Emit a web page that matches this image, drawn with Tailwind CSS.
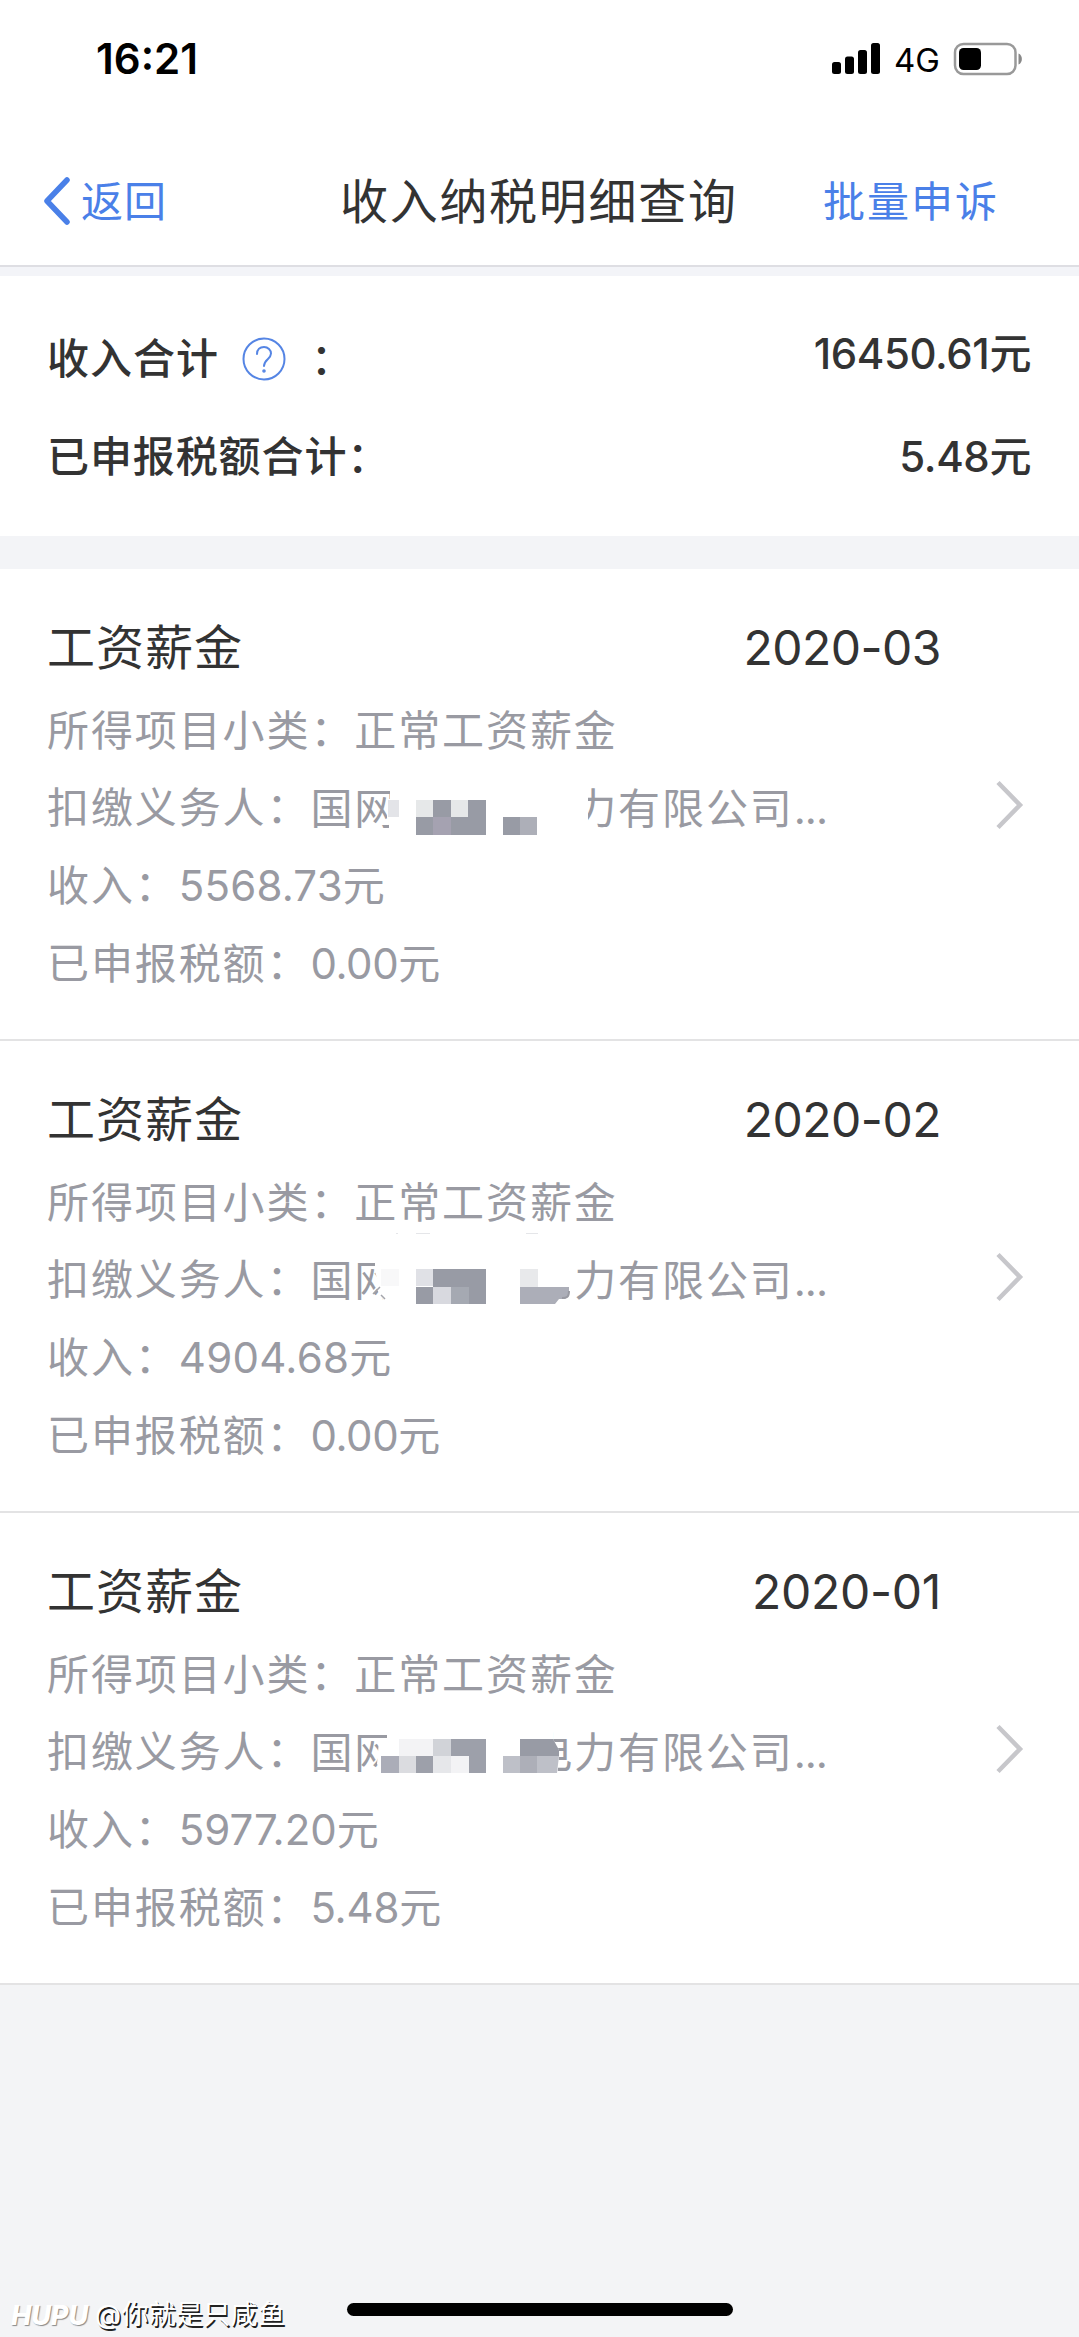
<!DOCTYPE html>
<html lang="zh-CN">
<head>
<meta charset="utf-8">
<title>收入纳税明细查询</title>
<script src="https://cdn.jsdelivr.net/npm/@tailwindcss/browser@4"></script>
</head>
<body class="w-[1079px] h-[2337px] overflow-hidden bg-[#f3f4f6] text-[#333333] font-['Inter','Noto_Sans_CJK_SC',sans-serif] flex flex-col">
  <!-- status bar -->
  <header class="h-[118px] bg-white flex items-center justify-between pl-[96px] pr-[54px] shrink-0">
    <span class="text-[42px] leading-none font-semibold text-black">16:21</span>
    <div class="flex items-center text-black">
      <svg class="w-[50px] h-[34px]" viewBox="0 0 50 34"><rect x="0" y="20" width="9" height="12" rx="2.5"/><rect x="13" y="14.500" width="9" height="17.500" rx="2.500"/><rect x="26" y="8" width="9" height="24" rx="2.500"/><rect x="39" y="1" width="9" height="31" rx="2.500"/></svg>
      <span class="text-[33px] leading-none ml-[12px] w-[48px] pt-[2px]">4G</span>
      <svg class="w-[72px] h-[34px] ml-[11px]" viewBox="0 0 72 34"><rect x="2" y="2" width="60.500" height="30" rx="8.500" fill="none" stroke="#999" stroke-width="2.500"/><rect x="6" y="6" width="22" height="22" rx="4.500"/><path d="M65.500 11.500c4.500 1.500 4.500 9.500 0 11z" fill="#888"/></svg>
    </div>
  </header>
  <!-- navigation -->
  <nav class="h-[149px] bg-white border-b-2 border-[#dedee3] grid grid-cols-[340px_1fr_340px] shrink-0">
    <div class="flex items-center pl-[44px] h-[166px] text-[#4a80e8]">
      <svg class="w-[26px] h-[48px]" viewBox="0 0 26 48" fill="none" stroke="currentColor" stroke-width="5.500" stroke-linecap="round" stroke-linejoin="round"><path d="M23 3 3 24l20 21"/></svg>
      <span class="text-[42px] leading-none ml-[11px] tracking-[1px] pt-[1px]">返回</span>
    </div>
    <h1 class="flex items-center h-[168px] text-[48px] leading-none tracking-[1.700px] whitespace-nowrap">收入纳税明细查询</h1>
    <div class="flex items-center justify-end h-[167px] pr-[80px] text-[42px] leading-none tracking-[2px] text-[#4a80e8]">批量申诉</div>
  </nav>
  <div class="h-[9px] bg-[#f3f4f8] shrink-0"></div>
  <!-- totals -->
  <section class="h-[260px] bg-white pl-[47px] pr-[48px] pt-[34px] font-medium text-[42px] leading-none shrink-0">
    <div class="h-[98px] flex items-center justify-between">
      <div class="flex items-center tracking-[1px]">收入合计
        <svg class="w-[44px] h-[44px] ml-[23px] mr-[25px]" viewBox="0 0 44 44" fill="none" stroke="#5585e4" stroke-width="2" stroke-linecap="round"><circle cx="22" cy="22" r="20.500"/><path d="M15 17c0-4.500 3-7 7-7s7 3 7 6.500c0 5.500-7 6-7 12.500"/><circle cx="22" cy="34" r=".8"/></svg>：</div>
      <span class="pb-[10px] tracking-[-0.4px]">16450.61元</span>
    </div>
    <div class="h-[98px] flex items-center justify-between"><span class="tracking-[.9px]">已申报税额合计：</span><span class="tracking-[-0.4px]">5.48元</span></div>
  </section>
  <div class="h-[33px] bg-[#f3f4f7] shrink-0"></div>
  <!-- income records -->
  <main class="shrink-0 text-[42px] leading-none text-[#999aa2]">
    <article class="h-[472px] bg-white border-b-2 border-[#e3e3e4] pl-[47px] relative">
      <div class="h-[122px] pt-[36px] pr-[138px] flex justify-between items-center text-[48px] text-[#333333]"><h2 class="tracking-[1px]">工资薪金</h2><time class="tracking-[-0.5px]">2020-03</time></div>
      <p class="h-[78px] pt-[2px] flex items-center tracking-[1.900px]">所得项目小类：正常工资薪金</p>
      <p class="h-[78px] flex items-center tracking-[1.900px]">扣缴义务人：<span class="relative flex items-center h-[78px] pt-[1px]">国网<span class="w-[176px]"></span>力有限公司<span class="tracking-[-1px]">...</span>
        <svg class="absolute left-0 top-0 w-[320px] h-[78px]" viewBox="311 769 320 78" shape-rendering="crispEdges"><path fill="#fff" d="M393 780H589V840H384V832H390V818H388Z"/><path fill="#e3e4e8" d="M389 800h11v17h-11z"/><path fill="#e6e8e9" d="M417 800h17v17h-17zM452 800h17v17h-17z"/><path fill="#989ba5" d="M434 800h18v17h-18zM469 800h18v35h-35v-18h17zM417 817h17v18h-17zM504 817h17v18h-17z"/><path fill="#a5a2b1" d="M434 817h18v18h-18z"/><path fill="#adafb8" d="M521 817h17v18h-17z"/></svg></span></p>
      <p class="h-[78px] flex items-center tracking-[1.900px]">收入：<span class="tracking-[.2px]">5568.73元</span></p>
      <p class="h-[78px] flex items-center tracking-[1.900px]">已申报税额：<span class="tracking-[-0.4px]">0.00元</span></p>
      <svg class="absolute right-[55px] top-[211px] w-[28px] h-[50px]" viewBox="0 0 28 50" fill="none" stroke="#c7c7cb" stroke-width="4.500"><path d="M2 2.500 24 25 2 47.500"/></svg>
    </article>
    <article class="h-[472px] bg-white border-b-2 border-[#e3e3e4] pl-[47px] relative">
      <div class="h-[122px] pt-[36px] pr-[138px] flex justify-between items-center text-[48px] text-[#333333]"><h2 class="tracking-[1px]">工资薪金</h2><time class="tracking-[-0.5px]">2020-02</time></div>
      <p class="h-[78px] pt-[2px] flex items-center tracking-[1.900px]">所得项目小类：正常工资薪金</p>
      <p class="h-[78px] flex items-center tracking-[1.900px]">扣缴义务人：<span class="relative flex items-center h-[78px] pt-[1px]">国网<span class="w-[176px]"></span>力有限公司<span class="tracking-[-1px]">...</span>
        <svg class="absolute left-0 -top-[10px] w-[320px] h-[88px]" viewBox="311 1231 320 88"><path fill="#fff" d="M376 1255H420V1306H388L377 1288 379 1281 376 1272Z"/><path fill="none" stroke="#a3a4ab" stroke-width="1.500" d="m374 1294 7-7m1 8 4 4"/><path fill="#f8f8f9" d="M382 1269h18v17h-18z"/><path fill="#e0e1e6" d="M417 1269h17v17h-17z"/><path fill="#989ba5" d="M434 1269h53v35h-17v-17h-36zM417 1287h17v17h-17z"/><path fill="#d8d9df" d="M434 1287h18v17h-18z"/><path fill="#a5a9b2" d="M452 1287h18v17h-18z"/><path fill="#e8e9eb" d="M521 1269h18v18h-18z"/><path fill="#acaeb8" d="M521 1287h49v7l-4 5h-6l-4 5h-35z"/><path fill="none" stroke="#999aa2" stroke-width="2" d="M570 1291c0 6-2 7-7 7"/><path fill="#e5e6e9" d="M397 1233h2v1h-2zM417 1233h14v1h-14zM527 1233h12v1h-12z"/></svg></span></p>
      <p class="h-[78px] flex items-center tracking-[1.900px]">收入：<span class="tracking-[.3px]">4904.68元</span></p>
      <p class="h-[78px] flex items-center tracking-[1.900px]">已申报税额：<span class="tracking-[-0.4px]">0.00元</span></p>
      <svg class="absolute right-[55px] top-[211px] w-[28px] h-[50px]" viewBox="0 0 28 50" fill="none" stroke="#c7c7cb" stroke-width="4.500"><path d="M2 2.500 24 25 2 47.500"/></svg>
    </article>
    <article class="h-[472px] bg-white border-b-2 border-[#e3e3e4] pl-[47px] relative">
      <div class="h-[122px] pt-[36px] pr-[138px] flex justify-between items-center text-[48px] text-[#333333]"><h2 class="tracking-[1px]">工资薪金</h2><time class="tracking-[-0.3px]">2020-01</time></div>
      <p class="h-[78px] pt-[2px] flex items-center tracking-[1.900px]">所得项目小类：正常工资薪金</p>
      <p class="h-[78px] flex items-center tracking-[1.900px]">扣缴义务人：<span class="relative flex items-center h-[78px] pt-[1px]">国网<span class="w-[132px]"></span>电力有限公司<span class="tracking-[-1px]">...</span>
        <svg class="absolute left-0 top-0 w-[320px] h-[78px]" viewBox="311 1713 320 78"><path fill="#fff" d="M388 1725H554V1739L560 1750V1756L558 1780H382V1770L378 1764 380 1740H388Z"/><path fill="#f3f3f5" d="M400 1739h34v17h-34zM452 1756h18v17h-18z"/><path fill="#d1d3d8" d="M434 1739h18v17h-18z"/><path fill="#9da0aa" d="M452 1739h35v34h-17v-17h-18zM417 1756h17v17h-17z"/><path fill="#abadb8" d="M382 1756h18v17h-18z"/><path fill="#dbdce0" d="M400 1756h17v17h-17z"/><path fill="#e6e7ea" d="M434 1756h18v17h-18z"/><path fill="#989ba5" d="M521 1739h33l6 11v6h-39z"/><path fill="#bec0c8" d="M504 1756h56l-2 17h-54z"/><path fill="#adafb8" d="M521 1756h17v17h-17z"/></svg></span></p>
      <p class="h-[78px] flex items-center tracking-[1.900px]">收入：<span class="tracking-normal">5977.20元</span></p>
      <p class="h-[78px] flex items-center tracking-[1.900px]">已申报税额：<span class="tracking-[-0.2px]">5.48元</span></p>
      <svg class="absolute right-[55px] top-[211px] w-[28px] h-[50px]" viewBox="0 0 28 50" fill="none" stroke="#c7c7cb" stroke-width="4.500"><path d="M2 2.500 24 25 2 47.500"/></svg>
    </article>
  </main>
  <!-- watermark and home indicator -->
  <footer class="mt-auto h-[44px] pl-[11px] flex items-start text-white leading-none">
    <span class="w-[84px] pt-[9px] text-[27px] font-extrabold italic [text-shadow:1px_1px_1px_#888]">HUPU</span>
    <span class="w-[252px] pt-[8px] text-[27px] tracking-[.3px] whitespace-nowrap [text-shadow:1.5px_1.5px_0_#222]">@你就是只咸鱼</span>
    <div class="w-[386px] h-[13px] mt-[10px] rounded-full bg-black"></div>
  </footer>
</body>
</html>
